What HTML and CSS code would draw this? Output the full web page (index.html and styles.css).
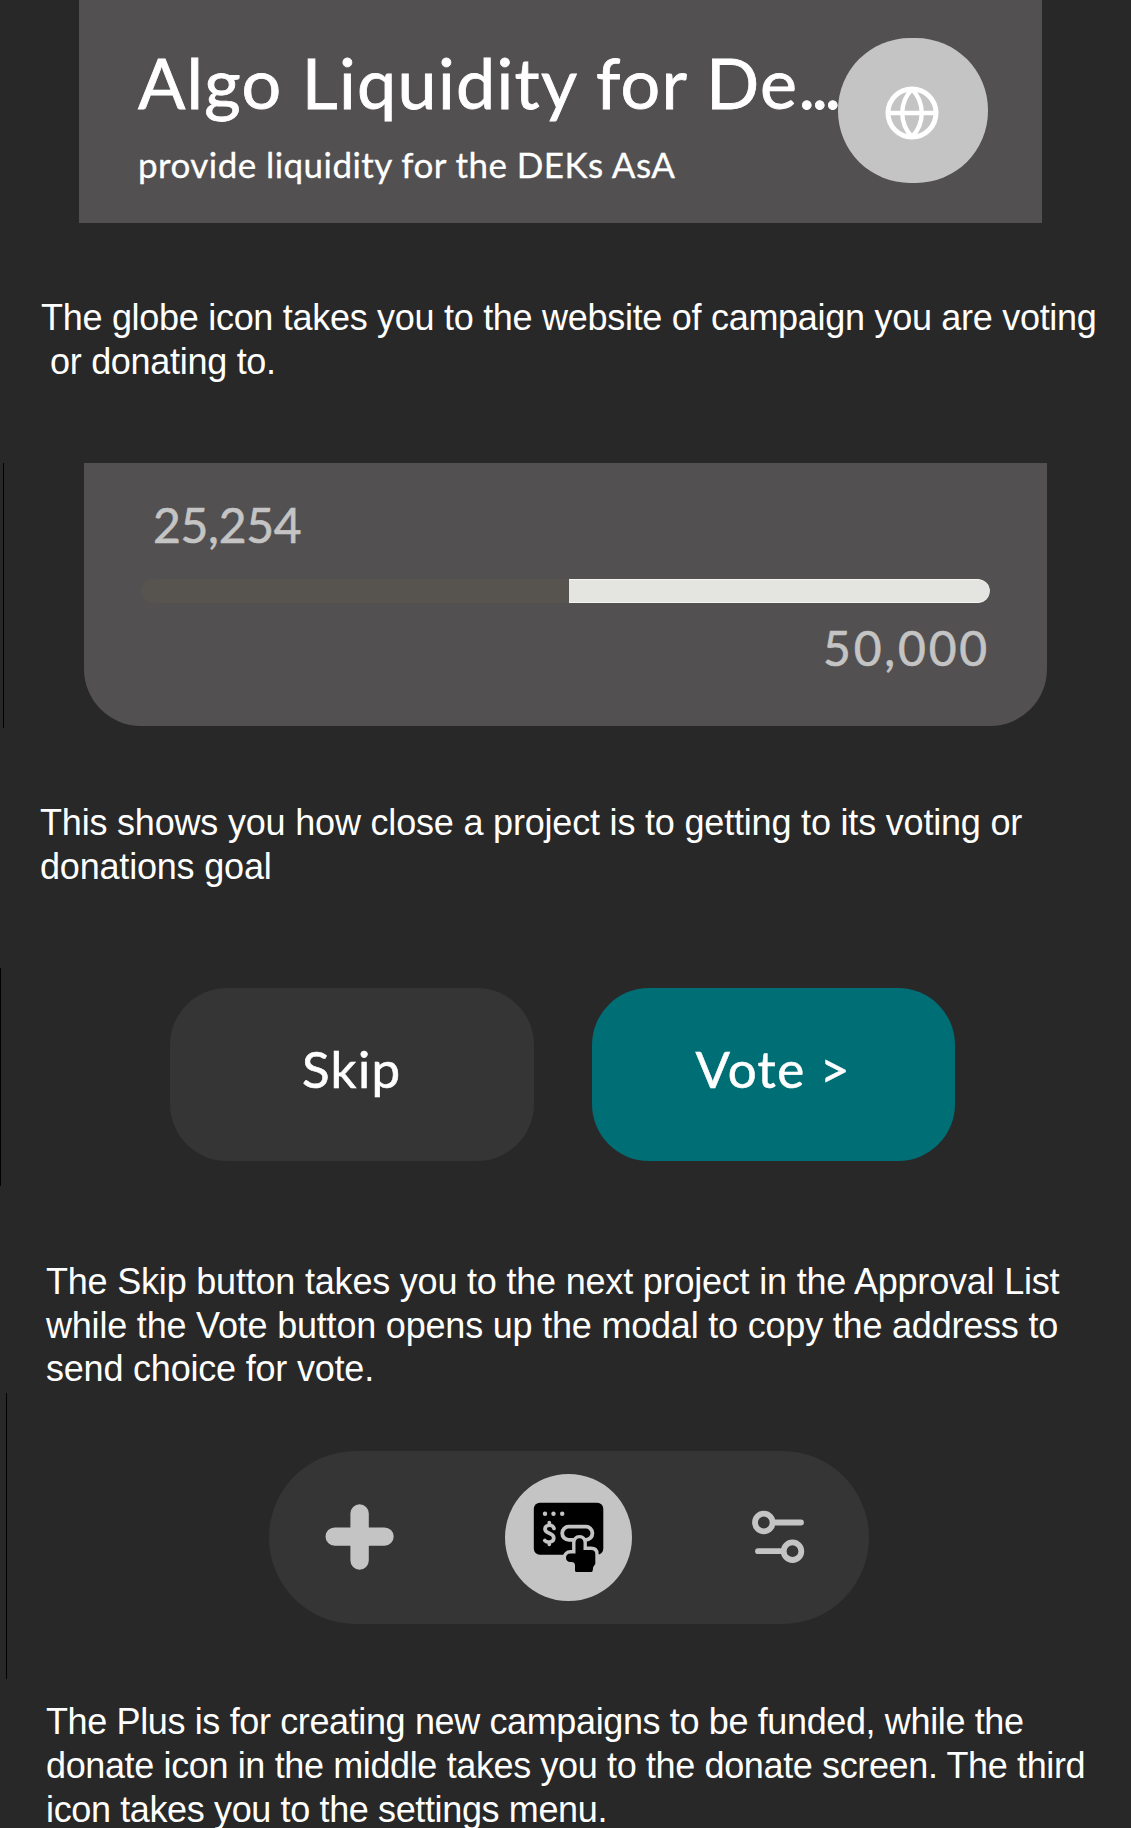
FILE: index.html
```html
<!DOCTYPE html>
<html lang="en">
<head>
<meta charset="utf-8">
<title>Campaign guide</title>
<link rel="stylesheet" href="styles.css">
</head>
<body>
<main class="guide">
  <header class="campaign">
    <div class="campaign-text">
      <h1 class="campaign-title">Algo Liquidity for De<span class="dots">...</span></h1>
      <p class="campaign-subtitle">provide liquidity for the DEKs AsA</p>
    </div>
    <a class="globe" aria-label="Website">
      <svg width="54" height="54" viewBox="0 0 54 54" fill="none" stroke="#fff" stroke-width="5">
        <circle cx="27" cy="27" r="24"/>
        <path d="M3 27H51M27 3C14 17 14 37 27 51C40 37 40 17 27 3Z" stroke-width="4.4" stroke-linejoin="round"/>
      </svg>
    </a>
  </header>

  <p class="note note-globe">The globe icon takes you to the website of campaign you are voting<br><span class="indent">or donating to.</span></p>

  <section class="frame frame-progress">
    <div class="progress">
      <div class="raised">25,254</div>
      <div class="bar"><div class="bar-done"></div><div class="bar-left"></div></div>
      <div class="goal">50,000</div>
    </div>
  </section>

  <p class="note note-progress">This shows you how close a project is to getting to its voting or<br>donations goal</p>

  <section class="frame frame-actions">
    <button class="action skip">Skip</button>
    <button class="action vote">Vote &gt;</button>
  </section>

  <p class="note note-actions">The Skip button takes you to the next project in the Approval List<br>while the Vote button opens up the modal to copy the address to<br>send choice for vote.</p>

  <section class="frame frame-nav">
    <nav class="nav">
      <svg class="nav-plus" width="70" height="66" viewBox="0 0 70 66" fill="none" stroke="#c4c4c4" stroke-width="18.4" stroke-linecap="round">
        <path d="M9.700 32.600H59.500M34.600 9.400V56.600"/>
      </svg>
      <div class="nav-donate">
        <svg width="127" height="127" viewBox="0 0 127 127">
          <rect x="28.800" y="28.700" width="69.500" height="52" rx="6" fill="#000"/>
          <g fill="#c4c4c4"><circle cx="40" cy="39.700" r="2.200"/><circle cx="48.500" cy="39.700" r="2.200"/><circle cx="57.200" cy="39.700" r="2.200"/></g>
          <path d="M49 54.500C48.500 50 40 50.200 40 55C40 60.500 48.800 58 48.800 64C48.800 68.800 41.500 69 39.800 66.500M44.300 48.500V51M44.300 68V70.300" fill="none" stroke="#c4c4c4" stroke-width="3.700" stroke-linecap="round"/>
          <rect x="57.200" y="52.600" width="30.200" height="13.200" rx="6.600" fill="#000" stroke="#c4c4c4" stroke-width="3.800"/>
          <path d="M74.500 64.300C72 64.300 70.500 66 70.500 68.500V79.500H65.500C62.500 79.500 61 81.500 61 83.700C61 86 62.500 88 65.500 88H66.500C69 88 70 89.500 70 91.500V96.500Q70 98 71.500 98H86Q87.500 98 87.700 96.500L88.200 93L90.300 90V80Q90.300 76 86 76H78.500V68.500C78.500 66 77 64.300 74.500 64.300Z" fill="#000" stroke="#c4c4c4" stroke-width="6.800" stroke-linejoin="round" paint-order="stroke"/>
        </svg>
      </div>
      <svg class="nav-settings" width="53" height="54" viewBox="0 0 53 54" fill="none" stroke="#c4c4c4" stroke-width="5.800" stroke-linecap="round">
        <circle cx="11.800" cy="12.500" r="8.800"/><path d="M22 12.500H49"/>
        <circle cx="40.500" cy="41.200" r="8.800"/><path d="M6 41.200H30"/>
      </svg>
    </nav>
  </section>

  <p class="note note-nav">The Plus is for creating new campaigns to be funded, while the<br>donate icon in the middle takes you to the donate screen. The third<br>icon takes you to the settings menu.</p>
</main>
</body>
</html>
```
FILE: styles.css
```css
* { box-sizing: border-box; }
html { background: #282828; }
body { margin: 0; overflow: hidden; }
h1, p { margin: 0; font-weight: 400; }
svg { display: block; }

.guide {
  display: flex;
  flex-direction: column;
  width: 1131px;
  height: 1828px;
  overflow: hidden;
  background: #282828;
  color: #fff;
  font-family: Lato, "Liberation Sans", sans-serif;
}
.guide > * { flex: none; }

.campaign {
  display: flex;
  align-items: flex-start;
  width: 963px;
  height: 223px;
  margin-left: 79px;
  padding: 38px 54px 0 59px;
  background: #535051;
}
.campaign-text { width: 699.5px; flex: none; white-space: nowrap; }
.campaign-title {
  padding-top: 2px;
  font-size: 70px;
  line-height: 84px;
  letter-spacing: 1.3px;
  -webkit-text-stroke: 0.8px;
}
.dots { letter-spacing: -3.5px; }
.campaign-subtitle {
  margin-top: 19px;
  font-size: 35px;
  line-height: 42px;
  letter-spacing: 0.44px;
  -webkit-text-stroke: 0.3px;
}
.globe {
  display: flex;
  align-items: center;
  justify-content: center;
  width: 150px;
  height: 145px;
  padding: 5px 1px 0 0;
  border-radius: 72px;
  background: #c4c4c4;
}

.note {
  font-family: "Liberation Sans", Arial, sans-serif;
  font-size: 36px;
  line-height: 43.7px;
  white-space: nowrap;
}
.indent { padding-left: 9px; }
.note-globe { margin: 73.2px 0 0 41px; height: 166.8px; letter-spacing: -0.29px; }
.note-progress { margin: 73.2px 0 0 40px; height: 166.8px; letter-spacing: -0.19px; }
.note-actions { margin: 74px 0 0 46px; height: 133px; letter-spacing: -0.2px; }
.note-nav { margin: 21.2px 0 0 46px; letter-spacing: -0.37px; }

.frame { display: flex; align-items: flex-start; border-left: 1px solid #000; }

.frame-progress { height: 265px; margin-left: 3px; padding-left: 80px; }
.progress {
  width: 963px;
  height: 263.5px;
  padding: 33px 57px 0;
  border-radius: 0 0 57px 57px;
  background: #535051;
  color: #c4c4c4;
  font-size: 48px;
  line-height: 58px;
  -webkit-text-stroke: 0.6px;
}
.raised { padding-left: 12px; letter-spacing: -0.3px; }
.bar { display: flex; height: 24px; margin: 25px 0 16px; border-radius: 12px; overflow: hidden; }
.bar-done { width: 428px; background: #57534e; }
.bar-left { flex: 1; background: #e4e4e1; border: solid #f4f4f1; border-width: 1px 0; border-radius: 0 12px 12px 0; }
.goal { text-align: right; letter-spacing: 2.8px; }

.frame-actions { gap: 58px; height: 218px; padding: 20px 0 0 169px; }
.action {
  width: 363.5px;
  height: 173px;
  padding: 0 0 10px;
  border: 0;
  border-radius: 57px;
  color: #fff;
  font: 51px/60px Lato, sans-serif;
  letter-spacing: 1.4px;
  -webkit-text-stroke: 0.6px;
}
.skip { background: #353535; }
.vote { background: #006e75; }

.frame-nav { height: 286px; margin-left: 6px; padding: 58px 0 0 262px; }
.nav {
  display: flex;
  align-items: center;
  width: 600px;
  height: 173px;
  padding-left: 56px;
  border-radius: 87px;
  background: #353535;
}
.nav-donate { width: 127px; height: 127px; margin: 0 120px 0 110px; border-radius: 50%; background: #c4c4c4; }
```
